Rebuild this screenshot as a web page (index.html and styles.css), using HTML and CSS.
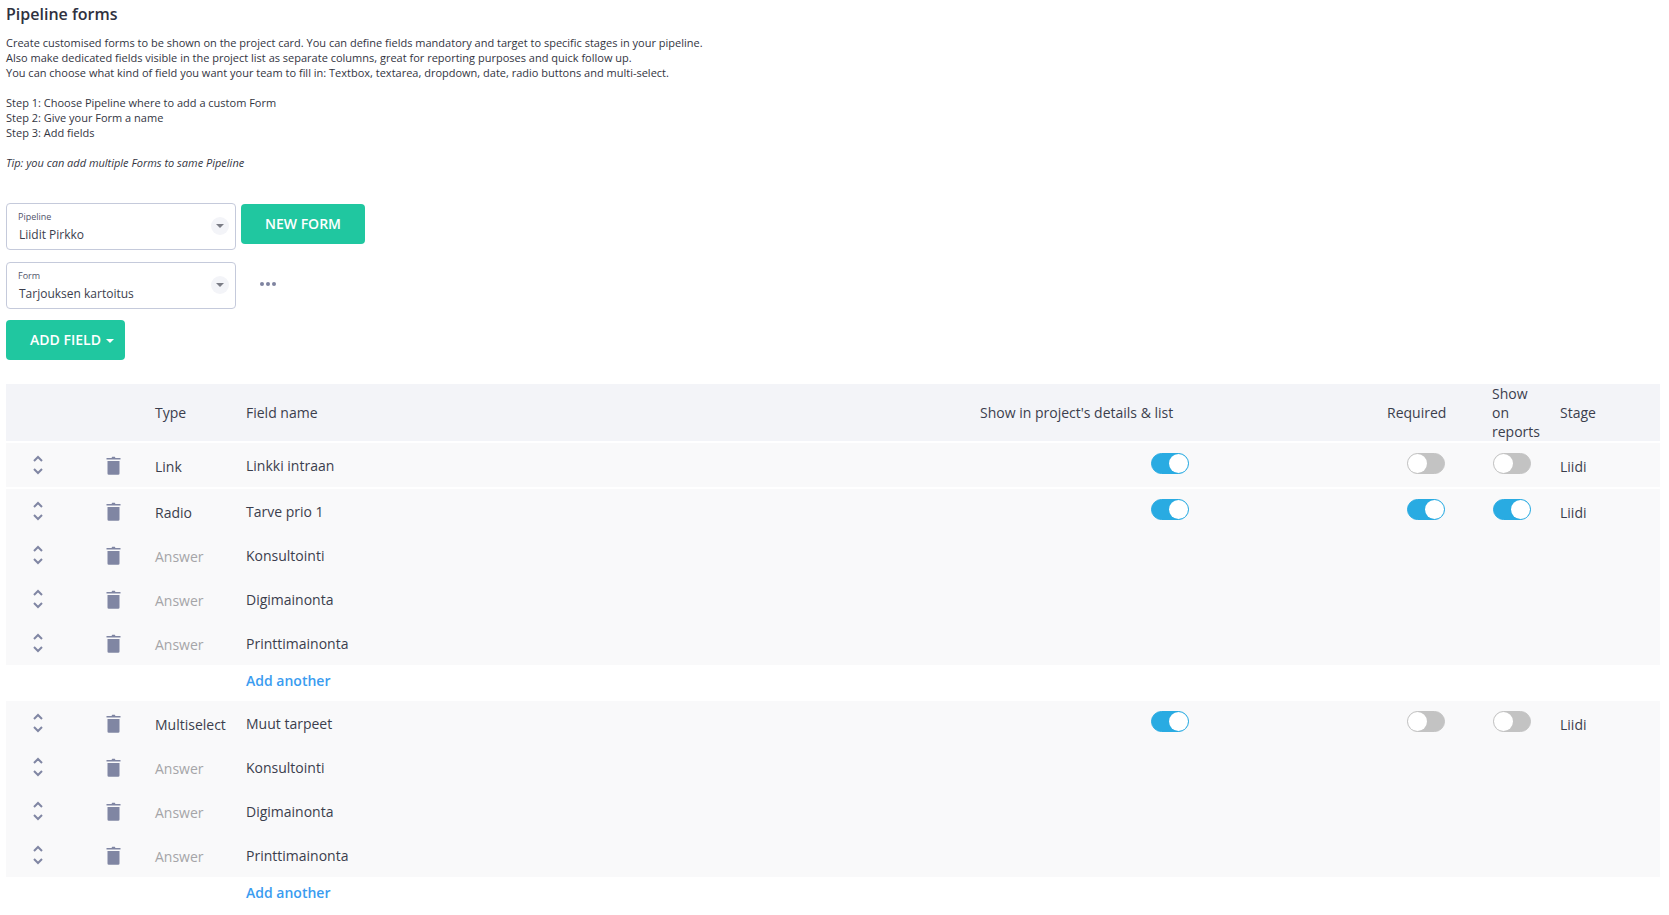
FILE: index.html
```html
<!DOCTYPE html>
<html lang="en">
<head>
  <meta charset="UTF-8" />
  <title>Pipeline forms</title>
  <link rel="stylesheet" href="styles.css">
</head>
<body>
  <svg class="defs" width="0" height="0">
    <symbol id="move" viewBox="0 0 12 20">
      <path d="M2 6l4-4 4 4M2 14l4 4 4-4" fill="none" stroke="#8086a3" stroke-width="2"/>
    </symbol>
    <symbol id="trash" viewBox="0 0 15 19">
      <path d="M0.5 2h5l0.7-1.3h2.6L9.5 2h5v1.5H0.5zM1.5 5h12v12.5a1.3 1.3 0 0 1-1.3 1.3H2.8a1.3 1.3 0 0 1-1.3-1.3z" fill="#8086a3"/>
    </symbol>
  </svg>

  <h1>Pipeline forms</h1>
  <p class="intro">
    Create customised forms to be shown on the project card. You can define fields mandatory and target to specific stages in your pipeline.<br>
    Also make dedicated fields visible in the project list as separate columns, great for reporting purposes and quick follow up.<br>
    You can choose what kind of field you want your team to fill in: Textbox, textarea, dropdown, date, radio buttons and multi-select.
  </p>
  <p class="intro">
    Step 1: Choose Pipeline where to add a custom Form<br>
    Step 2: Give your Form a name<br>
    Step 3: Add fields
  </p>
  <p class="intro"><em>Tip: you can add multiple Forms to same Pipeline</em></p>

  <div class="controls">
    <div class="select">
      <span class="select-label">Pipeline</span>
      <span class="select-value">Liidit Pirkko</span>
      <span class="select-arrow"></span>
    </div>
    <button class="btn btn-new">NEW FORM</button>
  </div>
  <div class="controls">
    <div class="select">
      <span class="select-label">Form</span>
      <span class="select-value">Tarjouksen kartoitus</span>
      <span class="select-arrow"></span>
    </div>
    <div class="more"><i></i><i></i><i></i></div>
  </div>
  <button class="btn btn-add">ADD FIELD<span class="caret"></span></button>

  <table class="fields">
    <colgroup>
      <col class="c-move"><col class="c-trash"><col class="c-type"><col class="c-name">
      <col class="c-show"><col class="c-req"><col class="c-rep"><col>
    </colgroup>
    <thead>
      <tr>
        <th></th><th></th><th>Type</th><th>Field name</th>
        <th>Show in project's details &amp; list</th><th>Required</th><th class="th-rep">Show on reports</th><th>Stage</th>
      </tr>
    </thead>
    <tbody>
      <tr class="row row-gap">
        <td class="cell-move"><svg><use href="#move"/></svg></td>
        <td class="cell-trash"><svg><use href="#trash"/></svg></td>
        <td class="cell-type">Link</td><td class="cell-name">Linkki intraan</td>
        <td class="cell-show"><span class="toggle on"></span></td>
        <td class="cell-req"><span class="toggle"></span></td>
        <td class="cell-rep"><span class="toggle"></span></td>
        <td class="cell-type">Liidi</td>
      </tr>
      <tr class="row">
        <td class="cell-move"><svg><use href="#move"/></svg></td>
        <td class="cell-trash"><svg><use href="#trash"/></svg></td>
        <td class="cell-type">Radio</td><td class="cell-name">Tarve prio 1</td>
        <td class="cell-show"><span class="toggle on"></span></td>
        <td class="cell-req"><span class="toggle on"></span></td>
        <td class="cell-rep"><span class="toggle on"></span></td>
        <td class="cell-type">Liidi</td>
      </tr>
      <tr class="row">
        <td class="cell-move"><svg><use href="#move"/></svg></td>
        <td class="cell-trash"><svg><use href="#trash"/></svg></td>
        <td class="cell-type answer">Answer</td><td class="cell-name">Konsultointi</td>
        <td></td><td></td><td></td><td></td>
      </tr>
      <tr class="row">
        <td class="cell-move"><svg><use href="#move"/></svg></td>
        <td class="cell-trash"><svg><use href="#trash"/></svg></td>
        <td class="cell-type answer">Answer</td><td class="cell-name">Digimainonta</td>
        <td></td><td></td><td></td><td></td>
      </tr>
      <tr class="row">
        <td class="cell-move"><svg><use href="#move"/></svg></td>
        <td class="cell-trash"><svg><use href="#trash"/></svg></td>
        <td class="cell-type answer">Answer</td><td class="cell-name">Printtimainonta</td>
        <td></td><td></td><td></td><td></td>
      </tr>
      <tr class="add-row">
        <td></td><td></td><td></td><td><a href="#">Add another</a></td>
        <td></td><td></td><td></td><td></td>
      </tr>
      <tr class="row">
        <td class="cell-move"><svg><use href="#move"/></svg></td>
        <td class="cell-trash"><svg><use href="#trash"/></svg></td>
        <td class="cell-type">Multiselect</td><td class="cell-name">Muut tarpeet</td>
        <td class="cell-show"><span class="toggle on"></span></td>
        <td class="cell-req"><span class="toggle"></span></td>
        <td class="cell-rep"><span class="toggle"></span></td>
        <td class="cell-type">Liidi</td>
      </tr>
      <tr class="row">
        <td class="cell-move"><svg><use href="#move"/></svg></td>
        <td class="cell-trash"><svg><use href="#trash"/></svg></td>
        <td class="cell-type answer">Answer</td><td class="cell-name">Konsultointi</td>
        <td></td><td></td><td></td><td></td>
      </tr>
      <tr class="row">
        <td class="cell-move"><svg><use href="#move"/></svg></td>
        <td class="cell-trash"><svg><use href="#trash"/></svg></td>
        <td class="cell-type answer">Answer</td><td class="cell-name">Digimainonta</td>
        <td></td><td></td><td></td><td></td>
      </tr>
      <tr class="row">
        <td class="cell-move"><svg><use href="#move"/></svg></td>
        <td class="cell-trash"><svg><use href="#trash"/></svg></td>
        <td class="cell-type answer">Answer</td><td class="cell-name">Printtimainonta</td>
        <td></td><td></td><td></td><td></td>
      </tr>
      <tr class="add-row">
        <td></td><td></td><td></td><td><a href="#">Add another</a></td>
        <td></td><td></td><td></td><td></td>
      </tr>
    </tbody>
  </table>
</body>
</html>
```

FILE: styles.css
```css
body {
  margin: 0;
  padding: 0 9px 0 6px;
  font-family: "Open Sans", sans-serif;
  font-size: 14px;
  color: #3b3e4d;
  background: #fff;
  overflow: hidden;
}
.defs {
  position: absolute;
}
h1 {
  margin: 0;
  padding-top: 3px;
  font-size: 16px;
  line-height: 22px;
  font-weight: 600;
  color: #2f3140;
}
.intro {
  margin: 0 0 15px;
  font-size: 11px;
  line-height: 15px;
  color: #33353f;
}
.intro:first-of-type {
  margin-top: 10px;
}
.intro:last-of-type {
  margin-bottom: 33px;
}
.controls {
  display: flex;
  align-items: flex-start;
  gap: 5px;
  margin-bottom: 12px;
}
.select {
  position: relative;
  box-sizing: border-box;
  width: 230px;
  height: 47px;
  padding: 7px 12px 0 11px;
  border: 1px solid #c5cadb;
  border-radius: 4px;
}
.select-label {
  display: block;
  font-size: 9px;
  line-height: 12px;
  color: #50536a;
}
.select-value {
  display: block;
  margin-top: 2px;
  padding-left: 1px;
  font-size: 12px;
  line-height: 20px;
  color: #3b3e4d;
}
.select-arrow {
  position: absolute;
  right: 6px;
  top: 13px;
  width: 18px;
  height: 18px;
  border-radius: 50%;
  background: #f3f4f8;
}
.select-arrow::after {
  content: "";
  position: absolute;
  left: 5px;
  top: 7px;
  border: 4px solid transparent;
  border-top: 4px solid #7b7d86;
  border-bottom: 0;
}
.btn {
  height: 40px;
  padding: 0 0 2px;
  border: none;
  border-radius: 4px;
  background: #20c7a0;
  color: #fff;
  font-family: inherit;
  font-size: 14px;
  font-weight: 600;
}
.btn-new {
  width: 124px;
  margin-top: 1px;
}
.btn-add {
  display: block;
  width: 119px;
  margin-top: -1px;
  padding-left: 13px;
}
.caret {
  display: inline-block;
  margin-left: 5px;
  vertical-align: 2px;
  border: 4px solid transparent;
  border-top: 4px solid #fff;
  border-bottom: 0;
}
.more {
  display: flex;
  gap: 2px;
  margin: 20px 0 0 19px;
}
.more i {
  width: 4px;
  height: 4px;
  border-radius: 50%;
  background: #7f84a0;
}
.fields {
  width: 100%;
  margin-top: 24px;
  table-layout: fixed;
  border-collapse: separate;
  border-spacing: 0;
}
.c-move { width: 75px; }
.c-trash { width: 74px; }
.c-type { width: 91px; }
.c-name { width: 734px; }
.c-show { width: 407px; }
.c-req { width: 105px; }
.c-rep { width: 68px; }
th {
  box-sizing: border-box;
  height: 59px;
  padding: 0;
  border-bottom: 2px solid #fff;
  background: #f3f4f8;
  font-weight: 400;
  line-height: 19px;
  text-align: left;
}
th.th-rep {
  padding-right: 17px;
}
td {
  box-sizing: border-box;
  padding: 0;
}
.row td {
  height: 44px;
  background: #f9f9fa;
  vertical-align: middle;
}
.row-gap td {
  height: 46px;
  border-bottom: 2px solid #fff;
}
.add-row td {
  height: 36px;
  padding-bottom: 5px;
}
.add-row a {
  color: #3a9cf0;
  font-weight: 600;
  text-decoration: none;
}
.cell-move svg {
  display: block;
  width: 12px;
  height: 20px;
  margin-left: 26px;
}
.cell-trash svg {
  display: block;
  width: 15px;
  height: 19px;
  margin-left: 25px;
}
.row .cell-type {
  padding-top: 2px;
}
.answer {
  color: #a5a5a8;
}
.cell-name {
  color: #3b3e4d;
}
.cell-show {
  padding-left: 171px;
}
.cell-req {
  padding-left: 20px;
}
.cell-rep {
  padding-left: 1px;
}
.toggle {
  position: relative;
  display: block;
  box-sizing: border-box;
  width: 38px;
  height: 21px;
  margin-bottom: 3px;
  border: 1px solid #c3c3c3;
  border-radius: 11px;
  background: #c3c3c3;
}
.toggle::after {
  content: "";
  position: absolute;
  left: 0;
  top: 0;
  width: 19px;
  height: 19px;
  border-radius: 50%;
  background: #fff;
}
.toggle.on {
  border-color: #29abe2;
  background: #29abe2;
}
.toggle.on::after {
  left: 17px;
}
```
